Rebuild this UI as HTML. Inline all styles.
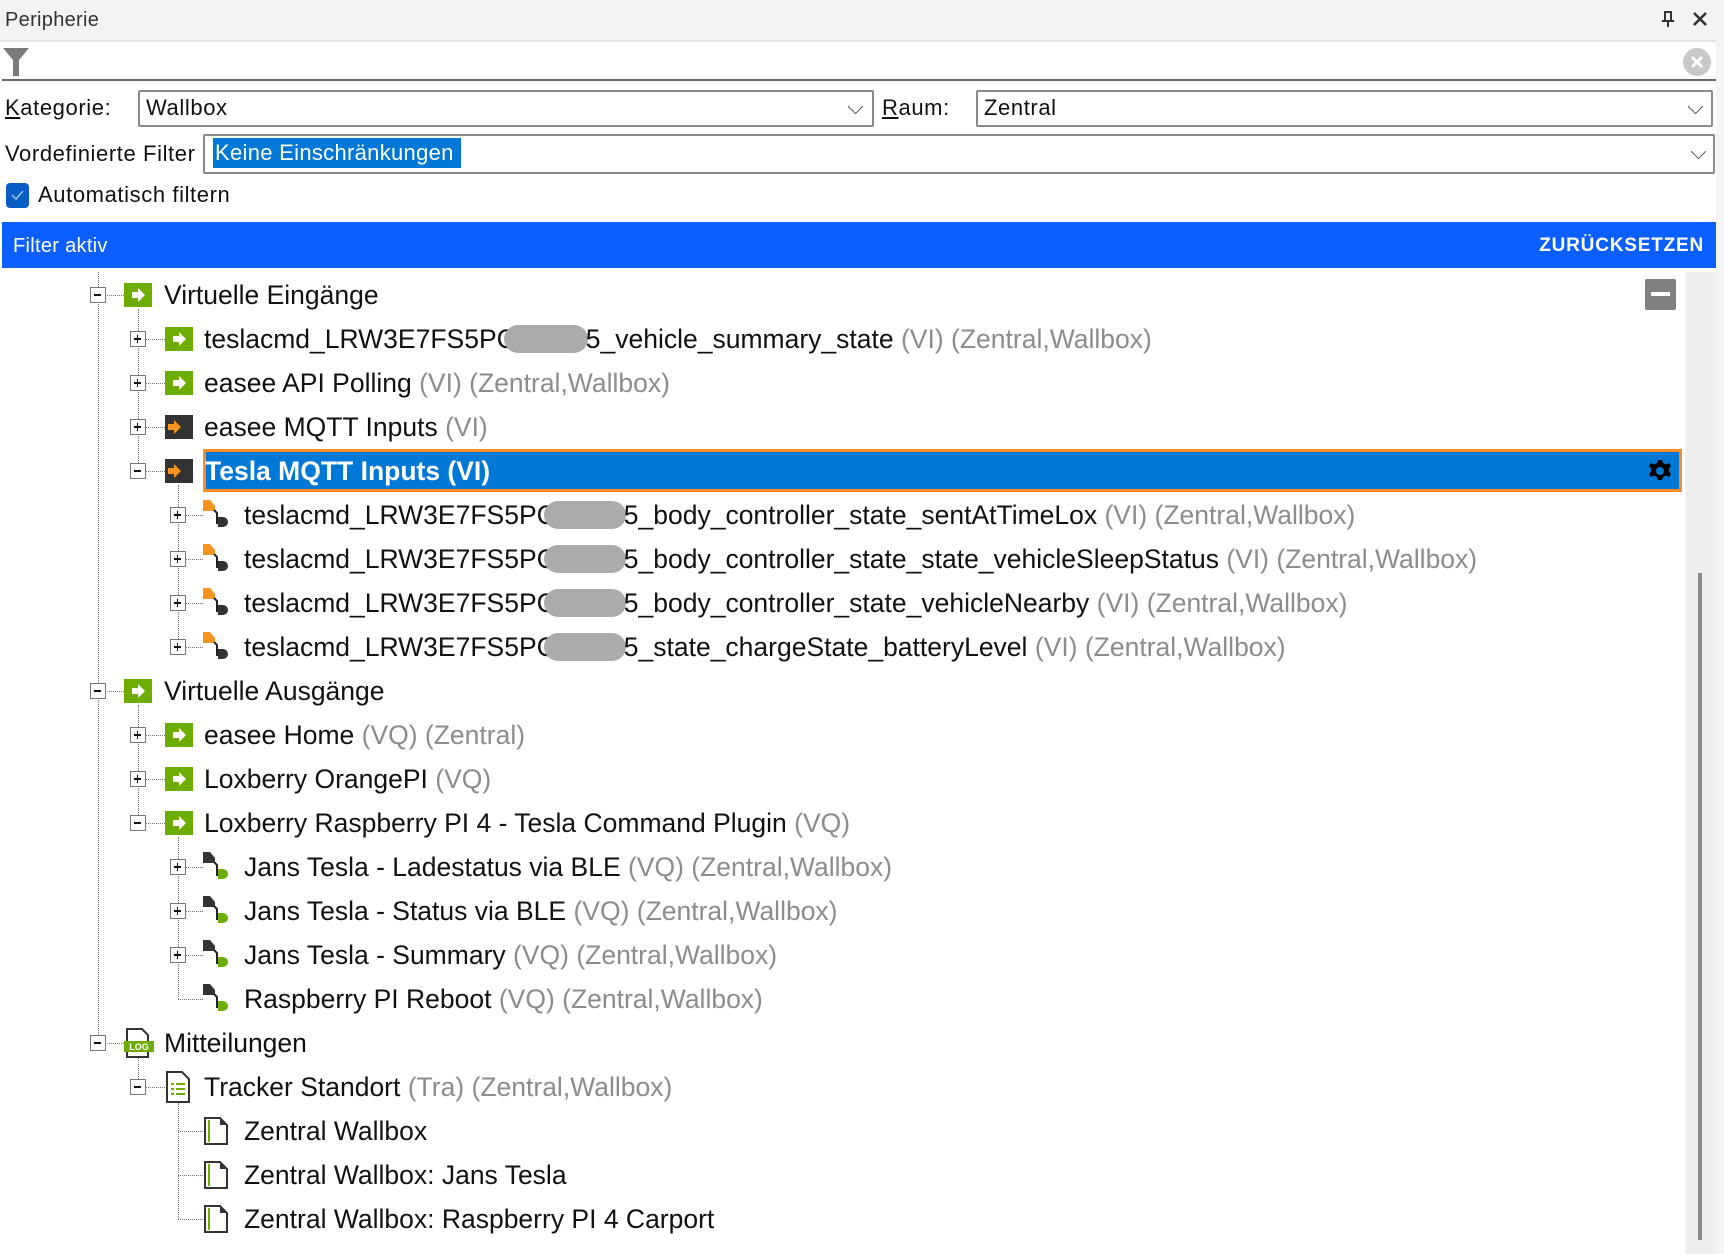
<!DOCTYPE html>
<html><head><meta charset="utf-8">
<style>
*{margin:0;padding:0;box-sizing:border-box}
body{width:1724px;height:1254px;background:#fff;font-family:"Liberation Sans",sans-serif;color:#111;position:relative;overflow:hidden}
.a{position:absolute}
.lbl{font-size:22px;line-height:26px;white-space:nowrap;letter-spacing:0.6px}
.box{position:absolute;border:2px solid #8a8a8a;background:#fff;border-radius:2px}
.chev{position:absolute;width:11px;height:11px;border-right:1.6px solid #555;border-bottom:1.6px solid #555;transform:rotate(45deg)}
.row{position:absolute;font-size:26.5px;line-height:30px;white-space:nowrap;color:#111}
.m{color:#8c8c8c}
.blob{display:inline-block;height:28px;background:#ababab;border-radius:14px;vertical-align:middle;margin-top:-4px}
.exp{position:absolute;width:16px;height:16px;border:1.5px solid #777;background:#fff}
.exp:before{content:"";position:absolute;left:3px;top:6px;width:7px;height:1.6px;background:#111}
.exp.p:after{content:"";position:absolute;left:5.7px;top:3px;width:1.6px;height:7.5px;background:#111}
.vd{position:absolute;width:0;border-left:1.5px dotted #777}
.hd{position:absolute;height:0;border-top:1.5px dotted #777}
</style></head><body>
<div class="a" style="left:0;top:0;width:1724px;height:40px;background:#f3f3f3"></div>
<div class="a lbl" style="left:5px;top:7px;font-size:20px;color:#333;letter-spacing:0.3px">Peripherie</div>
<svg class="a" style="left:1660px;top:10px" width="16" height="18"><path d="M4 2h8M5 2v9h6V2M2 11h12M8 11v6" stroke="#333" stroke-width="2" fill="none"/></svg>
<svg class="a" style="left:1692px;top:11px" width="16" height="16"><path d="M2 2l12 12M14 2L2 14" stroke="#333" stroke-width="2.6"/></svg>
<div class="a" style="left:0;top:40px;width:1724px;height:2px;background:#e2e2e2"></div>
<div class="a" style="left:2px;top:46px;width:1714px;height:34px;background:#fff"></div>
<svg class="a" style="left:3px;top:48px" width="26" height="28"><path d="M0 0h26L16 12v16h-6V12z" fill="#7a7a7a"/></svg>
<svg class="a" style="left:1683px;top:48px" width="28" height="28"><circle cx="14" cy="14" r="14" fill="#c8c8c8"/><path d="M9 9l10 10M19 9L9 19" stroke="#fff" stroke-width="3"/></svg>
<div class="a" style="left:2px;top:79px;width:1714px;height:2px;background:#666"></div>
<div class="a lbl" style="left:5px;top:95px"><u>K</u>ategorie:</div>
<div class="box" style="left:138px;top:90px;width:736px;height:37px"></div>
<div class="a lbl" style="left:146px;top:95px">Wallbox</div>
<div class="chev" style="left:850px;top:101px"></div>
<div class="a lbl" style="left:882px;top:95px"><u>R</u>aum:</div>
<div class="box" style="left:976px;top:90px;width:737px;height:37px"></div>
<div class="a lbl" style="left:984px;top:95px">Zentral</div>
<div class="chev" style="left:1690px;top:101px"></div>
<div class="a lbl" style="left:5px;top:141px">Vordefinierte Filter</div>
<div class="box" style="left:203px;top:134px;width:1512px;height:40px"></div>
<div class="a lbl" style="left:213px;top:138px;height:30px;width:248px;background:#0078d7;color:#fff;padding:2px 0 0 2px;letter-spacing:0.3px">Keine Einschränkungen</div>
<div class="chev" style="left:1693px;top:146px"></div>
<div class="a" style="left:6px;top:183px;width:23px;height:25px;background:#0a5cc6;border-radius:4px"></div>
<svg class="a" style="left:9px;top:188px" width="16" height="14"><path d="M3 7l4 4 7-8" stroke="#9cc3f0" stroke-width="1.5" fill="none"/></svg>
<div class="a lbl" style="left:38px;top:182px">Automatisch filtern</div>
<div class="a" style="left:2px;top:222px;width:1714px;height:46px;background:#0b5ffe"></div>
<div class="a lbl" style="left:13px;top:233px;color:#fff;font-size:20px;letter-spacing:0.3px">Filter aktiv</div>
<div class="a lbl" style="right:20px;top:233px;color:#fff;font-size:19px;letter-spacing:0.8px;font-weight:bold">ZURÜCKSETZEN</div>
<div class="a" style="left:1685px;top:272px;width:31px;height:982px;background:#efefef"></div>
<div class="a" style="left:1716px;top:40px;width:8px;height:1214px;background:#f5f5f5"></div>
<div class="a" style="left:1698px;top:573px;width:4px;height:667px;background:#8a8a8a"></div>
<div class="a" style="left:1645px;top:279px;width:31px;height:31px;background:#808080;border-radius:2px"></div>
<div class="a" style="left:1651px;top:292px;width:19px;height:4px;background:#fff"></div>
<div id="tree"></div>
<script>
var T=document.getElementById('tree');
function add(h){T.insertAdjacentHTML('beforeend',h);}
var EX=[98,138,178],IC=[124,165,203],TX=[164,204,244];
function cy(i){return 295+44*i;}
var G='<svg width="28" height="24"><rect width="28" height="24" fill="#6fac00"/><path d="M8 9h6V5l7 7-7 7v-4H8z" fill="#fff"/></svg>';
var D='<svg width="28" height="24"><rect width="28" height="24" fill="#333"/><path d="M3 9h6V5l7 7-7 7v-4H3z" fill="#f7931e"/><rect x="20" width="8" height="24" fill="#333"/></svg>';
function F(c1,c2){return '<svg width="30" height="30"><path d="M0 0h7l5 6v5H0z" fill="'+c1+'"/><path d="M11 10l3 3v10h3" stroke="#222" stroke-width="2" fill="none"/><path d="M15 17h5a5 5 0 0 1 0 10h-5z" fill="'+c2+'"/></svg>';}
var LOG='<svg width="30" height="30"><path d="M3 1h15l6 6v22H3z" fill="#fff" stroke="#333" stroke-width="2"/><rect x="0" y="13" width="30" height="11" fill="#6fac00"/><text x="15" y="22" font-size="9" font-weight="bold" fill="#fff" text-anchor="middle" font-family="Liberation Sans">LOG</text></svg>';
var DL='<svg width="26" height="32"><path d="M2 1h15l7 7v23H2z" fill="#fff" stroke="#333" stroke-width="2"/><g fill="#6fac00"><rect x="6" y="12" width="3" height="2"/><rect x="11" y="12" width="9" height="2"/><rect x="6" y="17" width="3" height="2"/><rect x="11" y="17" width="9" height="2"/><rect x="6" y="22" width="3" height="2"/><rect x="11" y="22" width="9" height="2"/></g></svg>';
var DC='<svg width="26" height="28"><path d="M2 1h15l7 7v19H2z" fill="#fff" stroke="#333" stroke-width="2"/><path d="M17 1v7h7z" fill="#333"/><rect x="5" y="3" width="2" height="22" fill="#6fac00"/></svg>';
var B1='<span class="blob" style="width:84px;margin-left:-12px;margin-right:-2px"></span>';
var B2='<span class="blob" style="width:82px;margin-left:-12px;margin-right:-2px"></span>';
var M=' <span class="m">(VI) (Zentral,Wallbox)</span>';
var rows=[
[0,'m',G,'Virtuelle Eingänge'],
[1,'p',G,'teslacmd_LRW3E7FS5PC'+B1+'5_vehicle_summary_state'+M],
[1,'p',G,'easee API Polling'+M],
[1,'p',D,'easee MQTT Inputs <span class="m">(VI)</span>'],
[1,'m',D,'SEL'],
[2,'p',F('#f7931e','#333'),'teslacmd_LRW3E7FS5PC'+B2+'5_body_controller_state_sentAtTimeLox'+M],
[2,'p',F('#f7931e','#333'),'teslacmd_LRW3E7FS5PC'+B2+'5_body_controller_state_state_vehicleSleepStatus'+M],
[2,'p',F('#f7931e','#333'),'teslacmd_LRW3E7FS5PC'+B2+'5_body_controller_state_vehicleNearby'+M],
[2,'p',F('#f7931e','#333'),'teslacmd_LRW3E7FS5PC'+B2+'5_state_chargeState_batteryLevel'+M],
[0,'m',G,'Virtuelle Ausgänge'],
[1,'p',G,'easee Home <span class="m">(VQ) (Zentral)</span>'],
[1,'p',G,'Loxberry OrangePI <span class="m">(VQ)</span>'],
[1,'m',G,'Loxberry Raspberry PI 4 - Tesla Command Plugin <span class="m">(VQ)</span>'],
[2,'p',F('#333','#6fac00'),'Jans Tesla - Ladestatus via BLE <span class="m">(VQ) (Zentral,Wallbox)</span>'],
[2,'p',F('#333','#6fac00'),'Jans Tesla - Status via BLE <span class="m">(VQ) (Zentral,Wallbox)</span>'],
[2,'p',F('#333','#6fac00'),'Jans Tesla - Summary <span class="m">(VQ) (Zentral,Wallbox)</span>'],
[2,'',F('#333','#6fac00'),'Raspberry PI Reboot <span class="m">(VQ) (Zentral,Wallbox)</span>'],
[0,'m',LOG,'Mitteilungen'],
[1,'m',DL,'Tracker Standort <span class="m">(Tra) (Zentral,Wallbox)</span>'],
[2,'',DC,'Zentral Wallbox'],
[2,'',DC,'Zentral Wallbox: Jans Tesla'],
[2,'',DC,'Zentral Wallbox: Raspberry PI 4 Carport']
];
function vl(x,y1,y2){add('<div class="vd" style="left:'+x+'px;top:'+y1+'px;height:'+(y2-y1)+'px"></div>');}
vl(98,272,cy(17));
vl(138,cy(0)+14,cy(4));vl(138,cy(9)+14,cy(12));vl(138,cy(17)+14,cy(18));
vl(178,cy(4)+14,cy(8));vl(178,cy(12)+14,cy(16));vl(178,cy(18)+16,cy(21));
rows.forEach(function(r,i){
 var L=r[0],y=cy(i);
 add('<div class="hd" style="left:'+EX[L]+'px;top:'+y+'px;width:'+(IC[L]-EX[L])+'px"></div>');
 if(r[1])add('<div class="exp '+(r[1]=='p'?'p':'')+'" style="left:'+(EX[L]-8)+'px;top:'+(y-8)+'px"></div>');
 var ih=r[2].match(/height="(\d+)"/)[1];
 add('<div class="a" style="left:'+IC[L]+'px;top:'+(y-ih/2)+'px;line-height:0">'+r[2]+'</div>');
 if(r[3]=='SEL'){
  add('<div class="a" style="left:203px;top:449px;width:1479px;height:43px;background:#0078d7;border:3px solid #ff8a24"></div>');
  add('<div class="row" style="left:205px;top:'+(y-15)+'px;color:#fff;font-weight:bold">Tesla MQTT Inputs (VI)</div>');
  add('<svg class="a" style="left:1648px;top:459px" width="24" height="24" viewBox="0 0 24 24"><path d="M10 1h4l1 3 3 1.5 3-1.5 2 3-2 2.5v3l2 2.5-2 3-3-1.5-3 1.5-1 3h-4l-1-3-3-1.5-3 1.5-2-3 2-2.5v-3L1 7l2-3 3 1.5L9 4z" fill="#000"/><circle cx="12" cy="12" r="4" fill="#0078d7"/></svg>');
 } else add('<div class="row" style="left:'+TX[L]+'px;top:'+(y-15)+'px">'+r[3]+'</div>');
});
</script>
</body></html>
